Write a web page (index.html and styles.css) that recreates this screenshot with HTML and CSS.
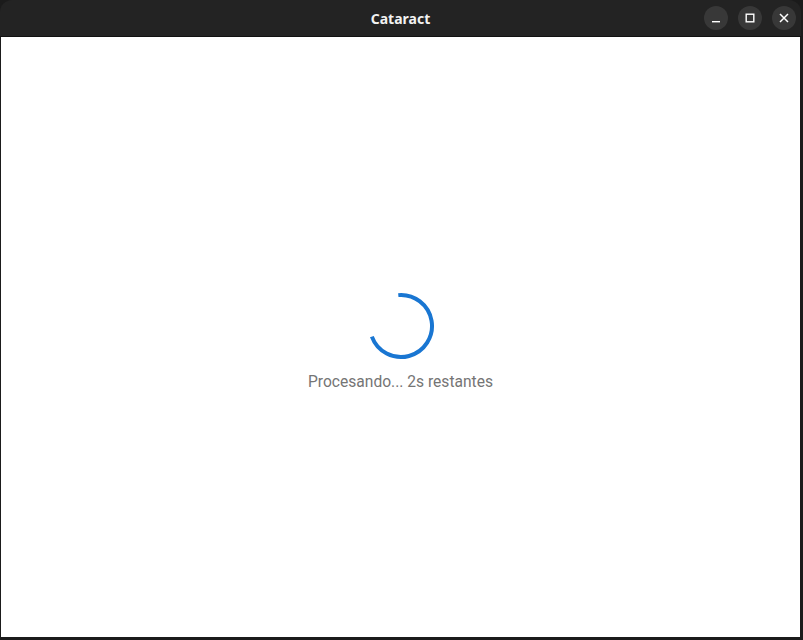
FILE: index.html
```html
<!DOCTYPE html>
<html lang="es">
<head>
<meta charset="utf-8">
<title>Cataract</title>
<link rel="stylesheet" href="styles.css">
</head>
<body>
<div class="window">
  <header class="titlebar">
    <div class="title">Cataract</div>
    <div class="controls">
      <button class="ctl" aria-label="Minimizar">
        <svg width="10" height="10" viewBox="0 0 10 10"><rect x="1" y="8" width="8" height="1.4" fill="#fff"/></svg>
      </button>
      <button class="ctl" aria-label="Maximizar">
        <svg width="10" height="10" viewBox="0 0 10 10"><rect x="1.2" y="1.2" width="7.6" height="7.6" fill="none" stroke="#fff" stroke-width="1.4"/></svg>
      </button>
      <button class="ctl" aria-label="Cerrar">
        <svg width="10" height="10" viewBox="0 0 10 10"><path d="M1 1L9 9M9 1L1 9" stroke="#fff" stroke-width="1.5"/></svg>
      </button>
    </div>
  </header>
  <main class="content">
    <svg class="spinner" width="68" height="68" viewBox="0 0 68 68">
      <path d="M31.30 3.12 A31 31 0 1 1 4.87 44.60" fill="none" stroke="#1976d2" stroke-width="4"/>
    </svg>
    <p class="status">Procesando... 2s restantes</p>
  </main>
</div>
</body>
</html>
```
FILE: styles.css
```css
html, body {
  margin: 0;
  padding: 0;
  background: #1b1b1b;
  width: 803px;
  height: 640px;
  overflow: hidden;
}
.window {
  width: 801px;
  display: flex;
  flex-direction: column;
}
.titlebar {
  height: 36px;
  background: #232323;
  border-radius: 12px 12px 0 0;
  display: flex;
  align-items: center;
  justify-content: center;
  position: relative;
  border-bottom: 1px solid #111;
}
.title {
  font-family: "Noto Sans", "DejaVu Sans", sans-serif;
  font-weight: 700;
  font-size: 14px;
  color: #f2f2f2;
  padding-top: 1px;
}
.controls {
  position: absolute;
  right: 5px;
  top: 6px;
  display: flex;
  gap: 10px;
}
.ctl {
  width: 24px;
  height: 24px;
  border-radius: 50%;
  border: none;
  padding: 0;
  background: #383838;
  display: flex;
  align-items: center;
  justify-content: center;
}
.content {
  height: 600px;
  background: #ffffff;
  border-left: 1px solid #1b1b1b;
  border-right: 1px solid #1b1b1b;
  display: flex;
  flex-direction: column;
  align-items: center;
  justify-content: center;
  padding-top: 9px;
  box-sizing: border-box;
}
.spinner {
  display: block;
}
.status {
  margin: 12px 0 0;
  font-family: Roboto, "Liberation Sans", sans-serif;
  font-size: 15.6px;
  line-height: 20px;
  color: #757575;
}
```
